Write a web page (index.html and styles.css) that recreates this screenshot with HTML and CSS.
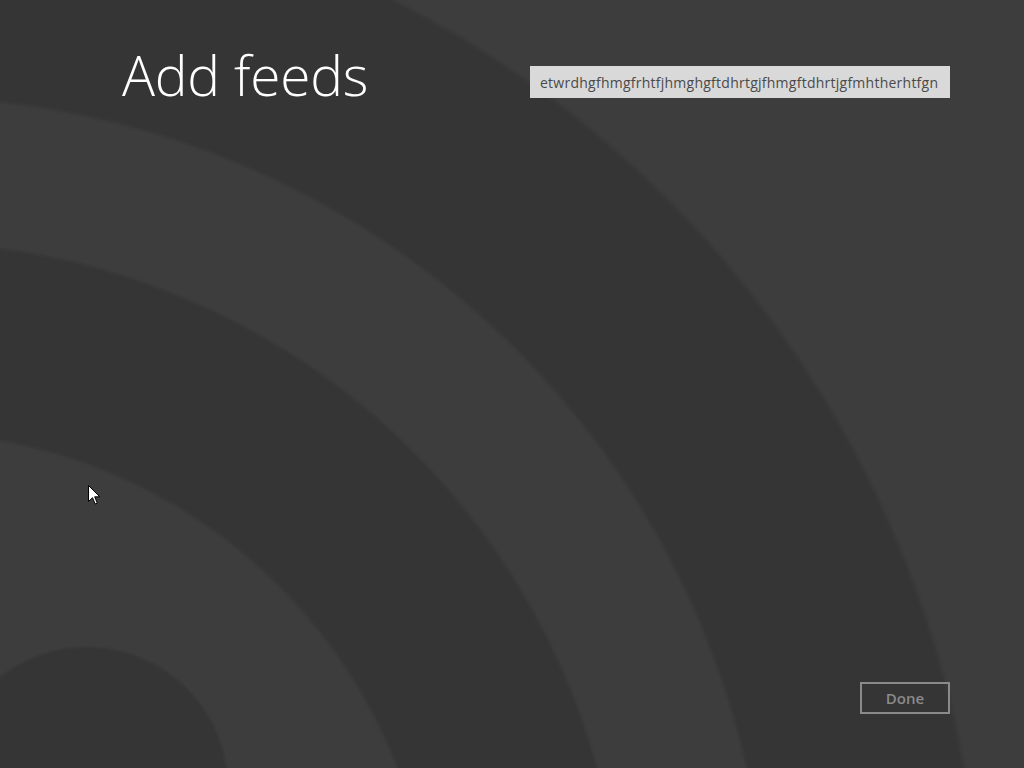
FILE: index.html
```html
<!DOCTYPE html>
<html lang="en">
<head>
    <meta charset="UTF-8">
    <meta name="viewport" content="width=device-width, initial-scale=1.0">
    <title>Add feeds</title>
    <link rel="stylesheet" href="styles.css">
</head>
<body>
    <div class="page">
        <header class="page-header">
            <h1 class="page-title">Add feeds</h1>
            <div class="feed-url">etwrdhgfhmgfrhtfjhmghgftdhrtgjfhmgftdhrtjgfmhtherhtfgn</div>
        </header>

        <footer class="page-footer">
            <button class="done-button" disabled>Done</button>
        </footer>
    </div>

    <!-- mouse pointer, as captured -->
    <svg class="cursor" width="13" height="21" viewBox="0 0 13 21">
        <path d="M0.5 0.5 L0.5 16.5 L4.5 12.7 L7.2 19 L9.3 18.1 L6.7 11.8 L11.8 11.8 Z" fill="#fff" stroke="#000" stroke-width="1"/>
    </svg>
</body>
</html>
```

FILE: styles.css
```css
* {
    margin: 0;
    padding: 0;
    box-sizing: border-box;
}

html, body {
    height: 100%;
}

body {
    overflow: hidden;
    font-family: "Open Sans", "Noto Sans", sans-serif;
    background-color: #3d3d3d;
    /* big rss symbol behind the page: the dot, then the arcs (soft edges) */
    background-image:
        radial-gradient(circle 145px at 87px 788px, #353535 139px, rgba(53, 53, 53, 0) 143px),
        radial-gradient(circle at -92px 957px,
            #3d3d3d 522px, #353535 527px,
            #353535 712px, #3d3d3d 717px,
            #3d3d3d 857px, #353535 862px,
            #353535 1070px, #3d3d3d 1076px);
}

.page {
    height: 100vh;
    display: flex;
    flex-direction: column;
    justify-content: space-between;
    padding: 0 74px 54px 120px;
}

.page-header {
    display: flex;
    justify-content: space-between;
    align-items: flex-start;
}

.page-title {
    margin: 47px 0 0 2px;
    font-size: 55px;
    font-weight: 300;
    letter-spacing: -0.2px;
    line-height: 1;
    color: #fff;
}

.feed-url {
    margin-top: 66px;
    width: 420px;
    height: 32px;
    padding: 0 10px;
    background: #d9d9d9;
    color: #4a4a4a;
    font-size: 14px;
    letter-spacing: 0.25px;
    line-height: 33px;
    white-space: nowrap;
    overflow: hidden;
}

.page-footer {
    display: flex;
    justify-content: flex-end;
}

.done-button {
    width: 90px;
    height: 32px;
    border: 2px solid #8a8a8a;
    background: transparent;
    color: #8a8a8a;
    font-family: "Open Sans", "Noto Sans", sans-serif;
    font-size: 15px;
    font-weight: 600;
}

.cursor {
    position: absolute;
    left: 88px;
    top: 485px;
}
```
